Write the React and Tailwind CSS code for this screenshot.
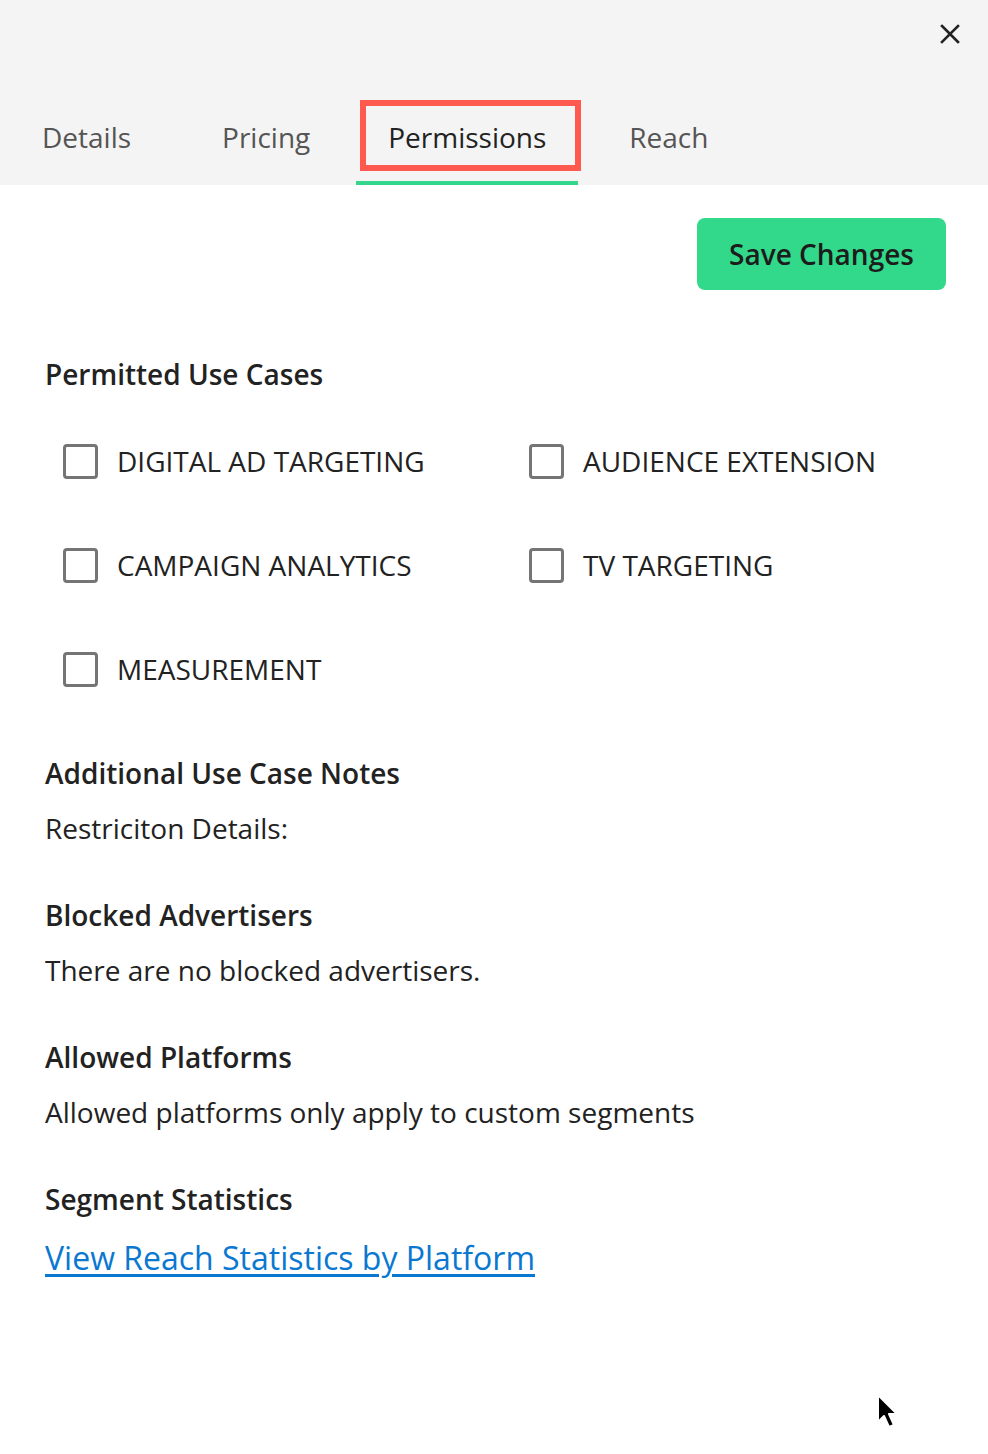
import React from 'react';

const font = { fontFamily: '"Open Sans", "Noto Sans", sans-serif' };

function Checkbox({ label }) {
  return (
    <label className="flex items-center h-[34px]">
      <span className="w-[35px] h-[35px] border-[3px] border-[#757575] rounded-[4px] bg-white shrink-0" />
      <span className="ml-[19px] text-[28px] text-[#222] leading-none">{label}</span>
    </label>
  );
}

function Section({ title, children }) {
  return (
    <div>
      <h3 className="text-[28px] font-semibold text-[#222] leading-none">{title}</h3>
      <div className="mt-[27px] text-[28px] text-[#222] leading-none">{children}</div>
    </div>
  );
}

export default function App() {
  return (
    <div style={font} className="w-[988px] h-[1454px] bg-white relative overflow-hidden">
      {/* header with tabs */}
      <div className="bg-[#f4f4f4] h-[185px] relative">
        <button className="absolute right-[28px] top-[24px] w-[20px] h-[20px] text-[#222]">
          <svg viewBox="0 0 20 20" width="20" height="20" fill="none" stroke="currentColor" strokeWidth="2.6" strokeLinecap="square">
            <path d="M2 2 L18 18 M18 2 L2 18" />
          </svg>
        </button>
        <div className="flex items-end h-full">
          <div className="ml-[42px] pb-[34px] text-[28px] text-[#555] leading-none">Details</div>
          <div className="ml-[91px] pb-[34px] text-[28px] text-[#555] leading-none">Pricing</div>
          <div className="ml-[46px] w-[222px] border-b-4 border-[#33d68a] pb-[30px] text-[28px] text-[#222] leading-none text-center relative">
            Permissions
            <span className="absolute left-[4px] top-[-23px] w-[221px] h-[71px] border-[6px] border-[#ff5a4f]" />
          </div>
          <div className="ml-[51px] pb-[34px] text-[28px] text-[#555] leading-none">Reach</div>
        </div>
      </div>

      <div className="px-[42px]">
        <div className="flex justify-end pt-[33px]">
          <button className="w-[249px] h-[72px] rounded-[8px] bg-[#33d98a] text-[#1c1c1c] text-[28px] font-semibold">
            Save Changes
          </button>
        </div>

        <h3 className="mt-[70px] ml-[3px] text-[28px] font-semibold text-[#222] leading-none">Permitted Use Cases</h3>

        <div className="mt-[56px] ml-[21px] grid grid-cols-[466px_1fr] gap-y-[70px]">
          <Checkbox label="DIGITAL AD TARGETING" />
          <Checkbox label="AUDIENCE EXTENSION" />
          <Checkbox label="CAMPAIGN ANALYTICS" />
          <Checkbox label="TV TARGETING" />
          <Checkbox label="MEASUREMENT" />
        </div>

        <div className="ml-[3px] mt-[73px] flex flex-col gap-[59px]">
          <Section title="Additional Use Case Notes">Restriciton Details:</Section>
          <Section title="Blocked Advertisers">There are no blocked advertisers.</Section>
          <Section title="Allowed Platforms">Allowed platforms only apply to custom segments</Section>
          <div>
            <h3 className="text-[28px] font-semibold text-[#222] leading-none">Segment Statistics</h3>
            <a href="#" className="block mt-[29px] text-[32px] text-[#0a78d0] underline underline-offset-[4px] leading-none">
              View Reach Statistics by Platform
            </a>
          </div>
        </div>
      </div>

      {/* mouse pointer */}
      <svg className="absolute left-[874px] top-[1392px]" width="28" height="40" viewBox="0 0 28 40">
        <path d="M4 3 L4 30 L10 24 L15 35 L20 33 L15 22 L23 22 Z" fill="#000" stroke="#fff" strokeWidth="2" strokeLinejoin="round" />
      </svg>
    </div>
  );
}
